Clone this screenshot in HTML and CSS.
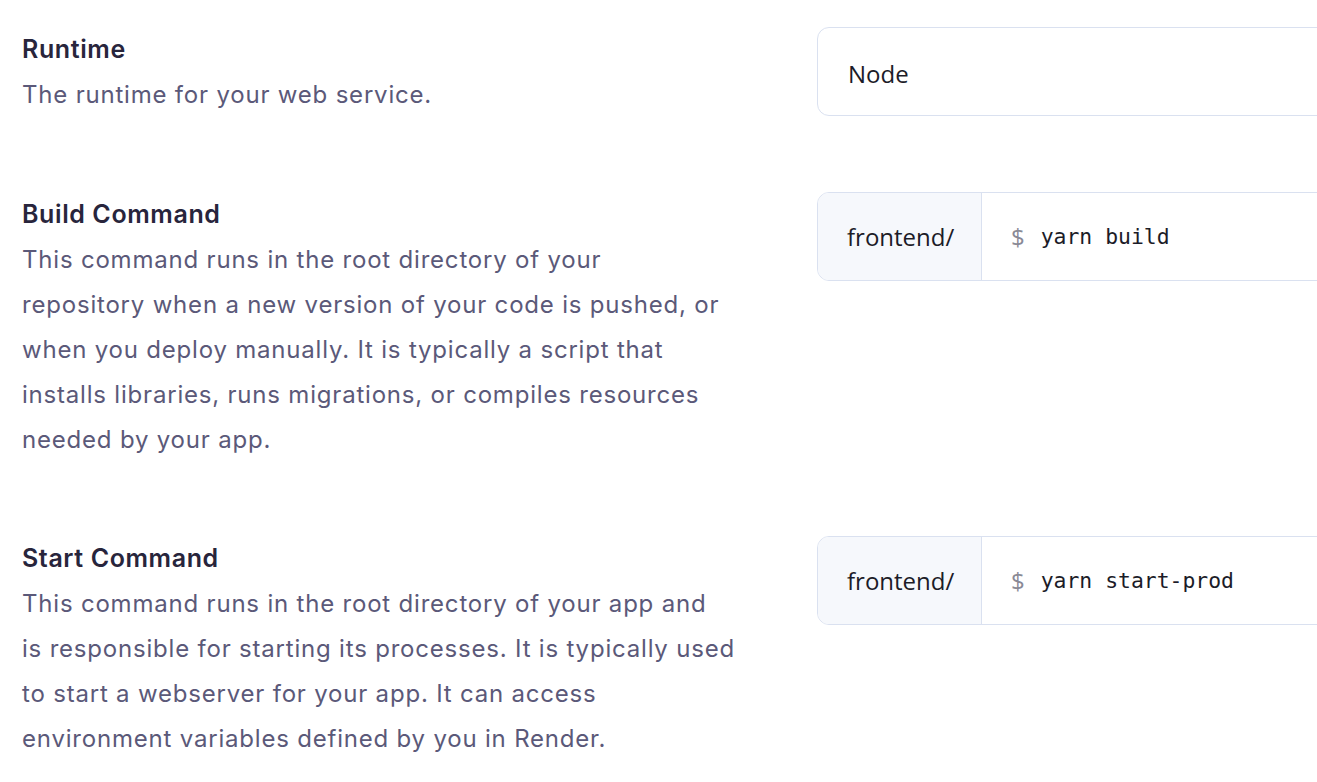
FILE: index.html
```html
<!DOCTYPE html>
<html lang="en">
<head>
<meta charset="utf-8">
<title>Settings</title>
<link rel="stylesheet" href="styles.css">
</head>
<body>
<div class="page">
  <section class="row">
    <div class="info">
      <h3 class="label">Runtime</h3>
      <p class="desc">The runtime for your web service.</p>
    </div>
    <div class="field">
      <div class="input plain">Node</div>
    </div>
  </section>

  <section class="row">
    <div class="info">
      <h3 class="label">Build Command</h3>
      <p class="desc">This command runs in the root directory of your<br>
      repository when a new version of your code is pushed, or<br>
      when you deploy manually. It is typically a script that<br>
      installs libraries, runs migrations, or compiles resources<br>
      needed by your app.</p>
    </div>
    <div class="field">
      <div class="input group">
        <span class="prefix">frontend/</span>
        <span class="cmd"><span class="dollar">$</span><span class="code">yarn build</span></span>
      </div>
    </div>
  </section>

  <section class="row">
    <div class="info">
      <h3 class="label">Start Command</h3>
      <p class="desc">This command runs in the root directory of your app and<br>
      is responsible for starting its processes. It is typically used<br>
      to start a webserver for your app. It can access<br>
      environment variables defined by you in Render.</p>
    </div>
    <div class="field">
      <div class="input group">
        <span class="prefix">frontend/</span>
        <span class="cmd"><span class="dollar">$</span><span class="code">yarn start-prod</span></span>
      </div>
    </div>
  </section>
</div>
</body>
</html>
```
FILE: styles.css
```css
html, body {
  margin: 0;
  padding: 0;
  background: #ffffff;
  overflow: hidden;
}
body {
  font-family: "Inter", "Noto Sans", sans-serif;
  width: 1317px;
  height: 782px;
}
.page {
  padding: 27px 0 0 22px;
  display: flex;
  flex-direction: column;
  gap: 74.5px;
}
.row {
  display: grid;
  grid-template-columns: 716px 1fr;
  column-gap: 79px;
  align-items: start;
}
.info {
  white-space: nowrap;
}
.label {
  margin: 0;
  font-size: 25px;
  line-height: 45px;
  font-weight: 600;
  letter-spacing: 0.6px;
  color: #28253c;
}
.desc {
  margin: 0;
  font-size: 24px;
  line-height: 45px;
  font-weight: 400;
  letter-spacing: 0.8px;
  color: #5b5979;
}
.field {
  overflow: hidden;
}
.input {
  box-sizing: border-box;
  width: calc(100% + 24px);
  height: 89px;
  border: 1.5px solid #dae1f0;
  border-radius: 12px;
  background: #fff;
  display: flex;
  align-items: center;
  padding-top: 4px;
  font-family: "Open Sans", "Noto Sans", sans-serif;
  font-size: 24px;
  color: #1c1c28;
}
.plain {
  padding-left: 30px;
}
.group {
  align-items: stretch;
  padding-top: 0;
}
.prefix {
  width: 164px;
  box-sizing: border-box;
  padding-left: 29px;
  display: flex;
  align-items: center;
  background: #f6f8fc;
  border-right: 1.5px solid #dae1f0;
  border-radius: 11px 0 0 11px;
}
.cmd {
  display: flex;
  align-items: center;
  padding-left: 29px;
}
.dollar {
  color: #8a8a96;
  margin-right: 16px;
}
.code {
  font-family: "DejaVu Sans Mono", "Liberation Mono", monospace;
  font-size: 21.4px;
  color: #1c1c28;
}
```
